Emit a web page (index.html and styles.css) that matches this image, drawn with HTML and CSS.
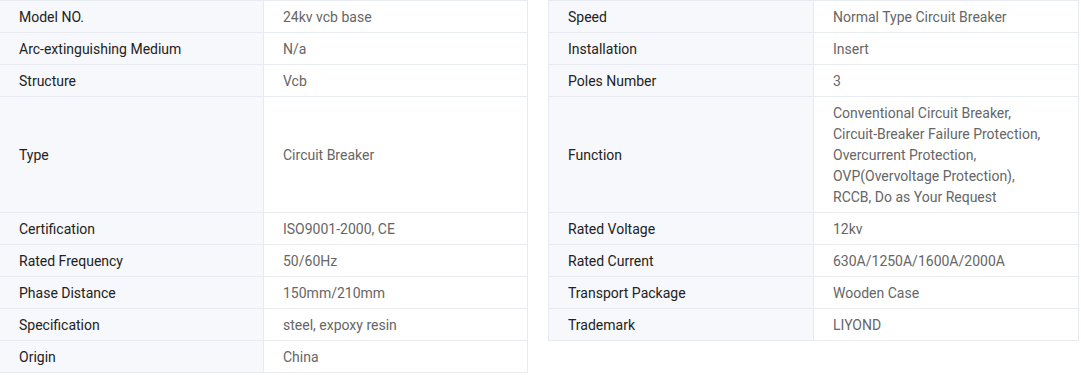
FILE: index.html
```html
<!DOCTYPE html>
<html lang="en">
<head>
<meta charset="utf-8">
<title>Specifications</title>
<link rel="stylesheet" href="styles.css">
</head>
<body>
<div class="specs">
  <table class="spec-table">
    <tr><td class="k">Model NO.</td><td class="v">24kv vcb base</td></tr>
    <tr><td class="k">Arc-extinguishing Medium</td><td class="v">N/a</td></tr>
    <tr><td class="k">Structure</td><td class="v">Vcb</td></tr>
    <tr class="tall"><td class="k">Type</td><td class="v">Circuit Breaker</td></tr>
    <tr><td class="k">Certification</td><td class="v">ISO9001-2000, CE</td></tr>
    <tr><td class="k">Rated Frequency</td><td class="v">50/60Hz</td></tr>
    <tr><td class="k">Phase Distance</td><td class="v">150mm/210mm</td></tr>
    <tr><td class="k">Specification</td><td class="v">steel, expoxy resin</td></tr>
    <tr><td class="k">Origin</td><td class="v">China</td></tr>
  </table>
  <table class="spec-table right">
    <tr><td class="k">Speed</td><td class="v">Normal Type Circuit Breaker</td></tr>
    <tr><td class="k">Installation</td><td class="v">Insert</td></tr>
    <tr><td class="k">Poles Number</td><td class="v">3</td></tr>
    <tr><td class="k">Function</td><td class="v">Conventional Circuit Breaker,<br>Circuit-Breaker Failure Protection,<br>Overcurrent Protection,<br>OVP(Overvoltage Protection),<br>RCCB, Do as Your Request</td></tr>
    <tr><td class="k">Rated Voltage</td><td class="v">12kv</td></tr>
    <tr><td class="k">Rated Current</td><td class="v">630A/1250A/1600A/2000A</td></tr>
    <tr><td class="k">Transport Package</td><td class="v">Wooden Case</td></tr>
    <tr><td class="k">Trademark</td><td class="v">LIYOND</td></tr>
  </table>
</div>
</body>
</html>
```
FILE: styles.css
```css
html, body {
  margin: 0;
  padding: 0;
  background: #ffffff;
}
body {
  font-family: Roboto, "Liberation Sans", Arial, sans-serif;
  font-size: 14px;
}
.specs {
  display: flex;
  align-items: flex-start;
  gap: 20px;
  margin-left: -1px;
}
.spec-table {
  border-collapse: collapse;
  table-layout: fixed;
  width: 529px;
}
.spec-table.right {
  width: 531px;
}
.spec-table td {
  border: 1px solid #e7ebf1;
  padding: 6px 19px 4px;
  line-height: 21px;
  vertical-align: middle;
  width: 50%;
}
.spec-table .k {
  background: #f7f8fb;
  color: #222222;
}
.spec-table .v {
  background: #ffffff;
  color: #666666;
}
.spec-table tr.tall td {
  height: 105px;
}
```
